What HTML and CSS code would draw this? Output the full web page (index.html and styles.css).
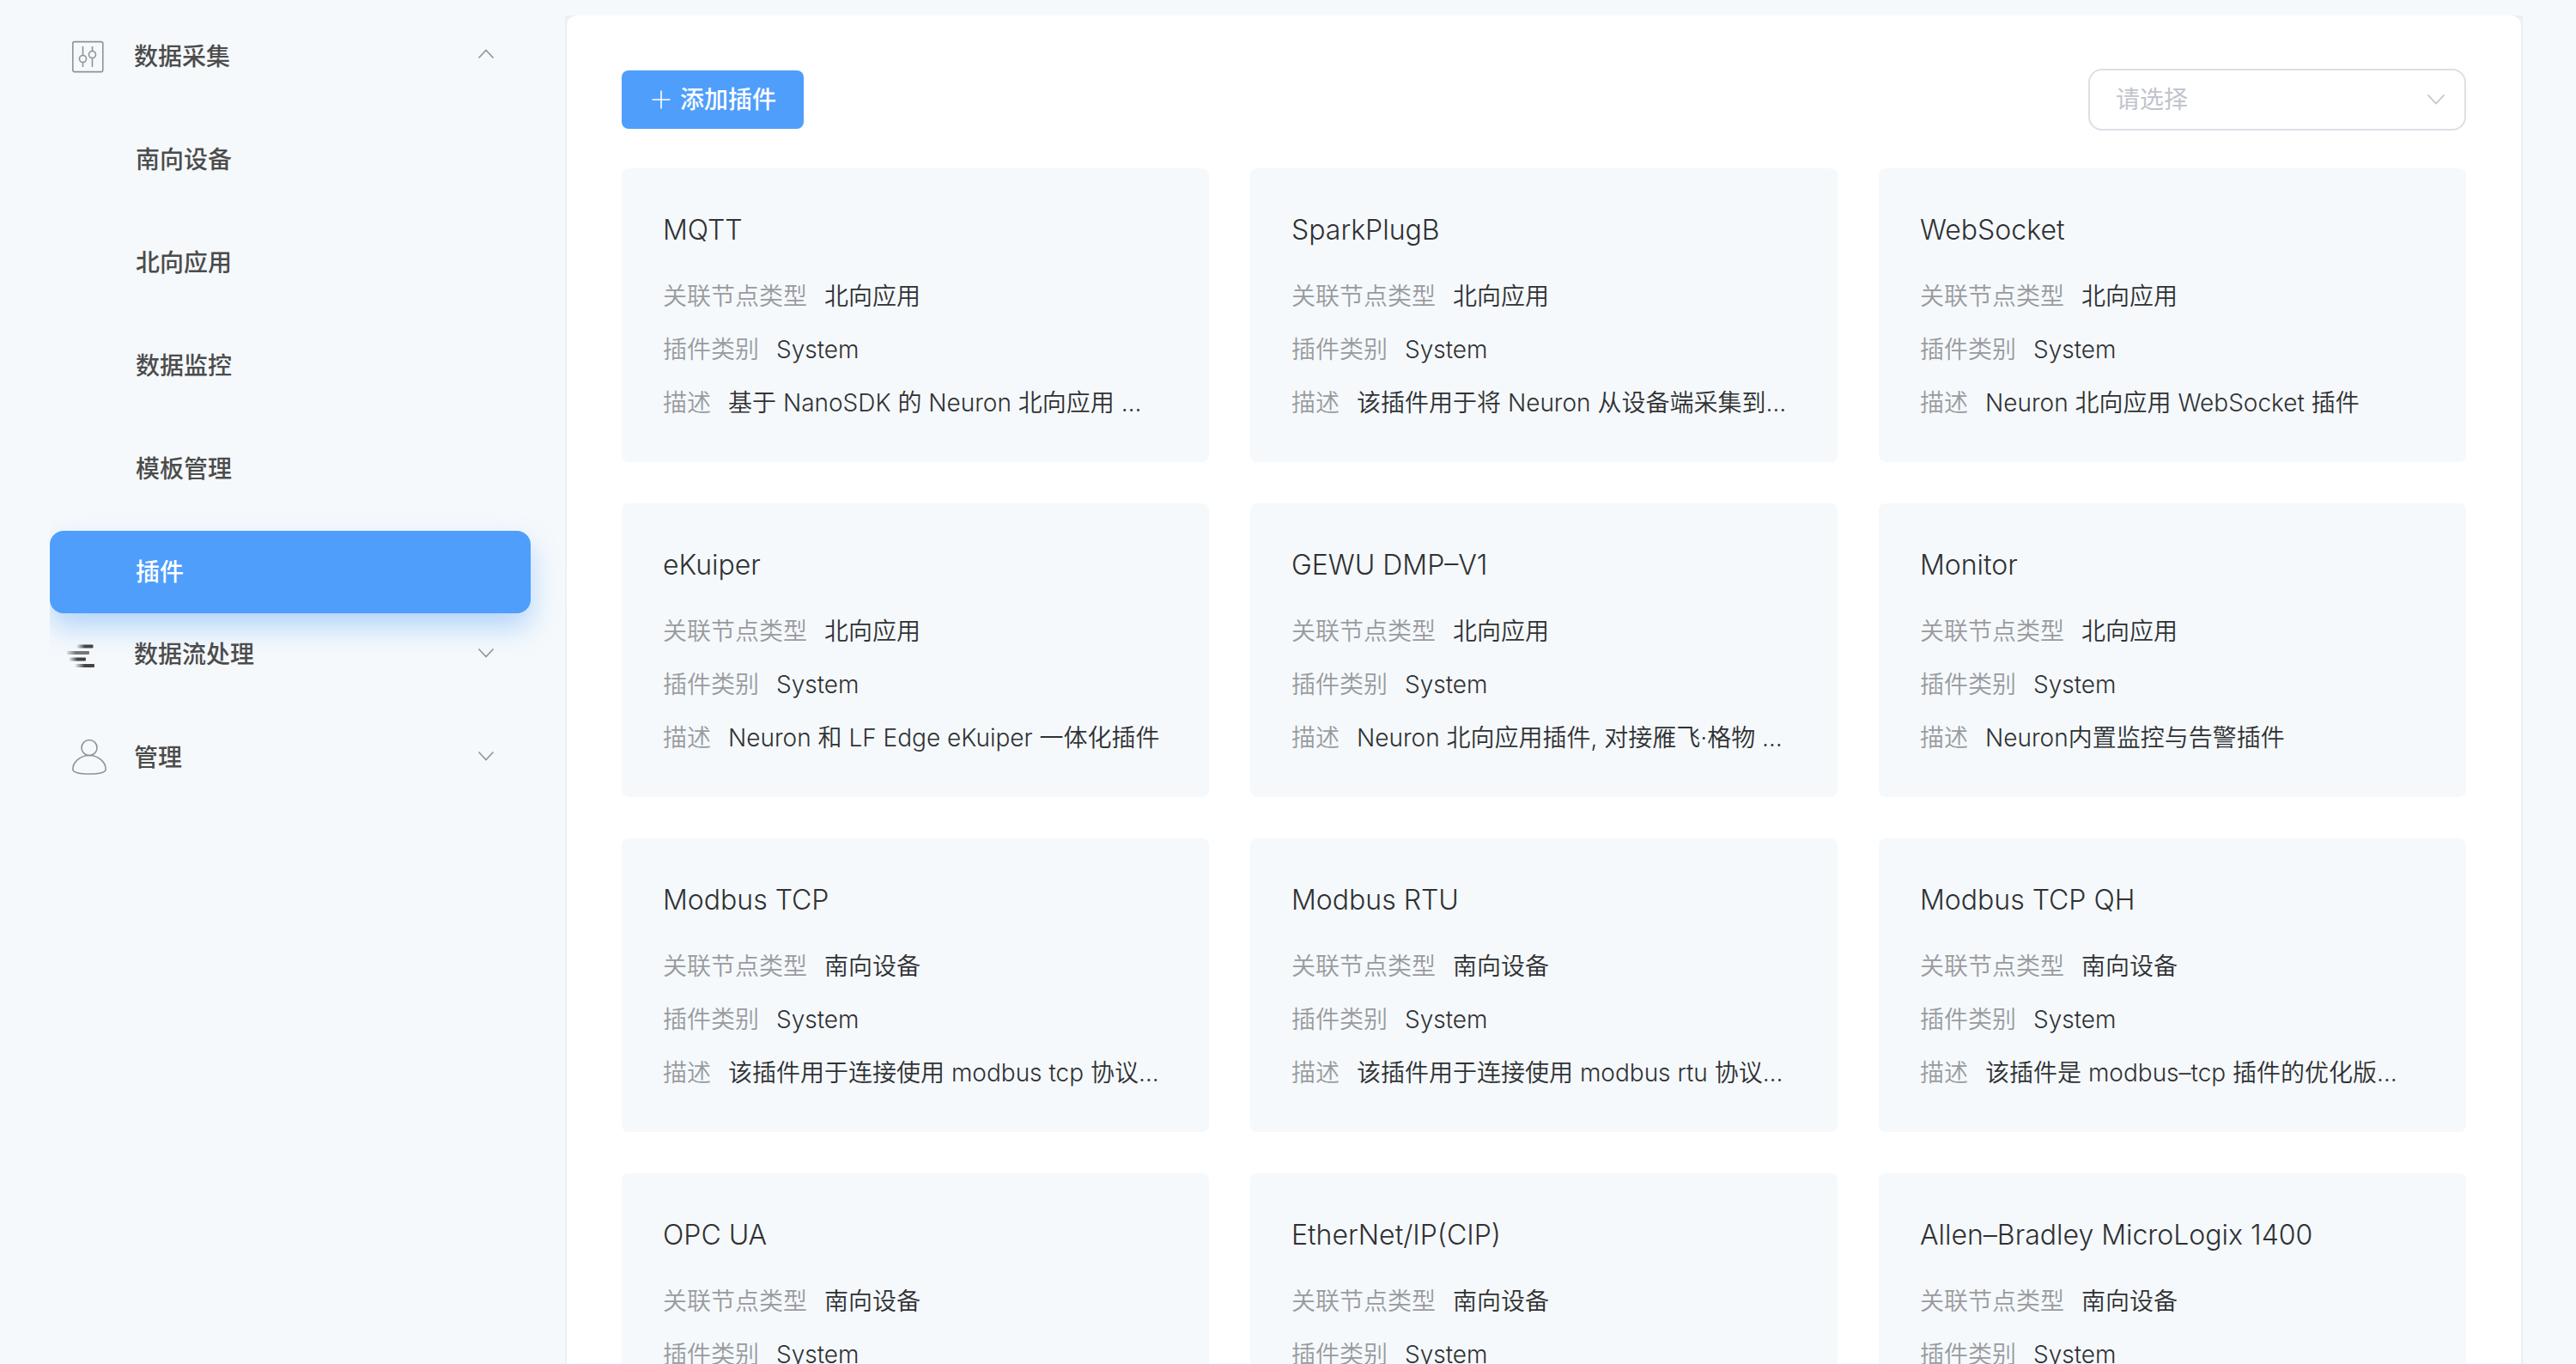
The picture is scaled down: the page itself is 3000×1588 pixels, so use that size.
FILE: index.html
```html
<!DOCTYPE html>
<html lang="zh-CN">
<head>
<meta charset="utf-8">
<meta name="viewport" content="width=device-width, initial-scale=1">
<title>插件</title>
<link rel="stylesheet" href="styles.css">
</head>
<body>
<div class="layout">
  <nav class="sidebar">
    <div class="menu">
      <button class="menu-group" type="button" aria-expanded="true">
        <svg class="menu-icon" viewBox="0 0 48 48" aria-hidden="true">
          <g fill="none" stroke="#909396" stroke-width="1.6">
            <rect x="6.8" y="6.6" width="35" height="35" rx="2"/>
            <path d="M18.5 12v10.6M18.5 30.4V36M29.500 12v5.600M29.500 25.400V36"/>
            <circle cx="18.500" cy="26.500" r="4"/>
            <circle cx="29.500" cy="21.500" r="4"/>
          </g>
        </svg>
        <span class="menu-label">数据采集</span>
        <svg class="chevron" viewBox="0 0 24 24" aria-hidden="true"><path d="M3.500 14.500L12 5.500l8.500 9"/></svg>
      </button>
      <a class="menu-item" href="#south">南向设备</a>
      <a class="menu-item" href="#north">北向应用</a>
      <a class="menu-item" href="#monitor">数据监控</a>
      <a class="menu-item" href="#template">模板管理</a>
      <a class="menu-item active" href="#plugin" aria-current="page">插件</a>
      <button class="menu-group follows-items" type="button" aria-expanded="false">
        <svg class="menu-icon" viewBox="0 0 48 48" aria-hidden="true">
          <defs>
            <linearGradient id="dark"><stop offset="0" stop-color="#444" stop-opacity="0"/><stop offset=".5" stop-color="#444"/></linearGradient>
            <linearGradient id="mid"><stop offset="0" stop-color="#777" stop-opacity=".2"/><stop offset=".4" stop-color="#777"/></linearGradient>
          </defs>
          <rect x="11" y="12.500" width="19.500" height="4" rx="1" fill="url(#dark)"/>
          <rect x="0" y="20" width="26" height="4" rx="1" fill="url(#mid)"/>
          <rect x="2" y="27.500" width="20" height="4" rx="1" fill="url(#dark)"/>
          <rect x="9" y="35" width="23" height="4" rx="1" fill="url(#dark)"/>
        </svg>
        <span class="menu-label">数据流处理</span>
        <svg class="chevron" viewBox="0 0 24 24" aria-hidden="true"><path d="M3.500 6.500l8.500 9 8.500-9"/></svg>
      </button>
      <button class="menu-group" type="button" aria-expanded="false">
        <svg class="menu-icon" viewBox="0 0 48 48" aria-hidden="true">
          <g fill="none" stroke="#909396" stroke-width="1.600">
            <circle cx="26" cy="12.500" r="9"/>
            <path d="M26 21.500C14 21.500 6.800 30.500 6.800 37.500C6.800 41 14 43 26 43S45.200 41 45.200 37.500C45.200 30.500 38 21.500 26 21.500Z"/>
          </g>
        </svg>
        <span class="menu-label">管理</span>
        <svg class="chevron" viewBox="0 0 24 24" aria-hidden="true"><path d="M3.500 6.500l8.500 9 8.500-9"/></svg>
      </button>
    </div>
  </nav>

  <main class="content">
    <div class="panel">
      <div class="toolbar">
        <button class="add-button" type="button">
          <svg class="plus" viewBox="0 0 28 28" aria-hidden="true"><path d="M14 3.500v21M3.500 14h21"/></svg>
          <span>添加插件</span>
        </button>
        <div class="select-box">
          <select class="select" aria-label="关联节点类型">
            <option>请选择</option>
          </select>
          <svg class="select-arrow" viewBox="0 0 24 24" aria-hidden="true"><path d="M2.500 6.500l9.500 10 9.500-10"/></svg>
        </div>
      </div>

      <div class="cards">
        <article class="card">
          <h2 class="card-title">MQTT</h2>
          <dl class="info">
            <div class="row"><dt>关联节点类型</dt><dd>北向应用</dd></div>
            <div class="row"><dt>插件类别</dt><dd>System</dd></div>
            <div class="row"><dt>描述</dt><dd>基于 NanoSDK 的 Neuron 北向应用 …</dd></div>
          </dl>
        </article>
        <article class="card">
          <h2 class="card-title">SparkPlugB</h2>
          <dl class="info">
            <div class="row"><dt>关联节点类型</dt><dd>北向应用</dd></div>
            <div class="row"><dt>插件类别</dt><dd>System</dd></div>
            <div class="row"><dt>描述</dt><dd>该插件用于将 Neuron 从设备端采集到…</dd></div>
          </dl>
        </article>
        <article class="card">
          <h2 class="card-title">WebSocket</h2>
          <dl class="info">
            <div class="row"><dt>关联节点类型</dt><dd>北向应用</dd></div>
            <div class="row"><dt>插件类别</dt><dd>System</dd></div>
            <div class="row"><dt>描述</dt><dd>Neuron 北向应用 WebSocket 插件</dd></div>
          </dl>
        </article>
        <article class="card">
          <h2 class="card-title">eKuiper</h2>
          <dl class="info">
            <div class="row"><dt>关联节点类型</dt><dd>北向应用</dd></div>
            <div class="row"><dt>插件类别</dt><dd>System</dd></div>
            <div class="row"><dt>描述</dt><dd>Neuron 和 LF Edge eKuiper 一体化插件</dd></div>
          </dl>
        </article>
        <article class="card">
          <h2 class="card-title">GEWU DMP–V1</h2>
          <dl class="info">
            <div class="row"><dt>关联节点类型</dt><dd>北向应用</dd></div>
            <div class="row"><dt>插件类别</dt><dd>System</dd></div>
            <div class="row"><dt>描述</dt><dd>Neuron 北向应用插件, 对接雁飞·格物 …</dd></div>
          </dl>
        </article>
        <article class="card">
          <h2 class="card-title">Monitor</h2>
          <dl class="info">
            <div class="row"><dt>关联节点类型</dt><dd>北向应用</dd></div>
            <div class="row"><dt>插件类别</dt><dd>System</dd></div>
            <div class="row"><dt>描述</dt><dd>Neuron内置监控与告警插件</dd></div>
          </dl>
        </article>
        <article class="card">
          <h2 class="card-title">Modbus TCP</h2>
          <dl class="info">
            <div class="row"><dt>关联节点类型</dt><dd>南向设备</dd></div>
            <div class="row"><dt>插件类别</dt><dd>System</dd></div>
            <div class="row"><dt>描述</dt><dd>该插件用于连接使用 modbus tcp 协议…</dd></div>
          </dl>
        </article>
        <article class="card">
          <h2 class="card-title">Modbus RTU</h2>
          <dl class="info">
            <div class="row"><dt>关联节点类型</dt><dd>南向设备</dd></div>
            <div class="row"><dt>插件类别</dt><dd>System</dd></div>
            <div class="row"><dt>描述</dt><dd>该插件用于连接使用 modbus rtu 协议…</dd></div>
          </dl>
        </article>
        <article class="card">
          <h2 class="card-title">Modbus TCP QH</h2>
          <dl class="info">
            <div class="row"><dt>关联节点类型</dt><dd>南向设备</dd></div>
            <div class="row"><dt>插件类别</dt><dd>System</dd></div>
            <div class="row"><dt>描述</dt><dd>该插件是 modbus–tcp 插件的优化版…</dd></div>
          </dl>
        </article>
        <article class="card">
          <h2 class="card-title">OPC UA</h2>
          <dl class="info">
            <div class="row"><dt>关联节点类型</dt><dd>南向设备</dd></div>
            <div class="row"><dt>插件类别</dt><dd>System</dd></div>
          </dl>
        </article>
        <article class="card">
          <h2 class="card-title">EtherNet/IP(CIP)</h2>
          <dl class="info">
            <div class="row"><dt>关联节点类型</dt><dd>南向设备</dd></div>
            <div class="row"><dt>插件类别</dt><dd>System</dd></div>
          </dl>
        </article>
        <article class="card">
          <h2 class="card-title">Allen–Bradley MicroLogix 1400</h2>
          <dl class="info">
            <div class="row"><dt>关联节点类型</dt><dd>南向设备</dd></div>
            <div class="row"><dt>插件类别</dt><dd>System</dd></div>
          </dl>
        </article>
      </div>
    </div>
  </main>
</div>
</body>
</html>
```

FILE: styles.css
```css
* {
  box-sizing: border-box;
}

body {
  margin: 0;
  background: #f5f9fc;
  color: #303133;
  font-family: Inter, "Noto Sans CJK SC", sans-serif;
  font-size: 28px;
  line-height: 42px;
}

button,
select {
  font: inherit;
}

.layout {
  display: flex;
  height: 100vh;
  overflow: hidden;
}

/* Sidebar */
.sidebar {
  flex: none;
  width: 658px;
  padding: 18px 0 0 58px;
}

.menu {
  display: flex;
  flex-direction: column;
  gap: 24px;
  padding-right: 40px;
  overflow: hidden;
}

.menu-group,
.menu-item {
  display: flex;
  align-items: center;
  height: 96px;
  flex: none;
  border: 0;
  border-radius: 16px;
  background: none;
  color: #4c4c4c;
  font-weight: 500;
  text-align: left;
  text-decoration: none;
}

.menu-group {
  gap: 30px;
  padding: 0 40px 0 20px;
}

.follows-items {
  margin-top: -24px;
}

.menu-item {
  padding-left: 100px;
}

.menu-item.active {
  background: #4f9efb;
  color: #fff;
  box-shadow: 0 16px 32px rgba(79, 158, 251, 0.4);
}

.menu-icon {
  flex: none;
  width: 48px;
  height: 48px;
}

.menu-label {
  flex: 1;
}

.chevron {
  flex: none;
  width: 24px;
  height: 24px;
  margin-bottom: 2px;
  fill: none;
  stroke: #909399;
  stroke-width: 1.6;
}

/* Content */
.content {
  flex: 1;
  min-width: 0;
  margin: 18px 62px 0 0;
  padding: 0 2px;
  background: #ebeff6;
}

.panel {
  min-height: 100%;
  padding: 62px 64px;
  border-radius: 12px;
  background: #fff;
}

.toolbar {
  display: flex;
  align-items: center;
  justify-content: space-between;
  margin-bottom: 44px;
}

.add-button {
  display: flex;
  align-items: center;
  gap: 8px;
  height: 68px;
  padding: 0 32px;
  border: 0;
  border-radius: 8px;
  background: #4f9efb;
  color: #fff;
  font-weight: 500;
}

.plus {
  width: 28px;
  height: 28px;
  fill: none;
  stroke: #fff;
  stroke-width: 1.6;
}

.select-box {
  position: relative;
  width: 440px;
}

.select {
  display: block;
  width: 100%;
  height: 72px;
  padding: 0 80px 0 30px;
  border: 2px solid #dcdfe6;
  border-radius: 16px;
  appearance: none;
  background: #fff;
  color: #c0c4cc;
}

.select-arrow {
  position: absolute;
  top: 24px;
  right: 23px;
  width: 24px;
  height: 24px;
  fill: none;
  stroke: #c0c4cc;
  stroke-width: 1.8;
  pointer-events: none;
}

/* Plugin cards */
.cards {
  display: grid;
  grid-template-columns: repeat(3, minmax(0, 1fr));
  grid-auto-rows: 1fr;
  gap: 48px;
}

.card {
  padding: 48px;
  border-radius: 8px;
  background: #f5f9fc;
}

.card-title {
  margin: 0 0 32px;
  font-size: 32px;
  font-weight: 300;
  line-height: 48px;
}

.info {
  display: flex;
  flex-direction: column;
  gap: 20px;
  margin: 0;
}

.row {
  display: flex;
  gap: 20px;
  white-space: nowrap;
}

.row dt {
  flex: none;
  color: #999b9e;
  font-weight: 350;
}

.row dd {
  margin: 0;
  font-weight: 350;
}
```
